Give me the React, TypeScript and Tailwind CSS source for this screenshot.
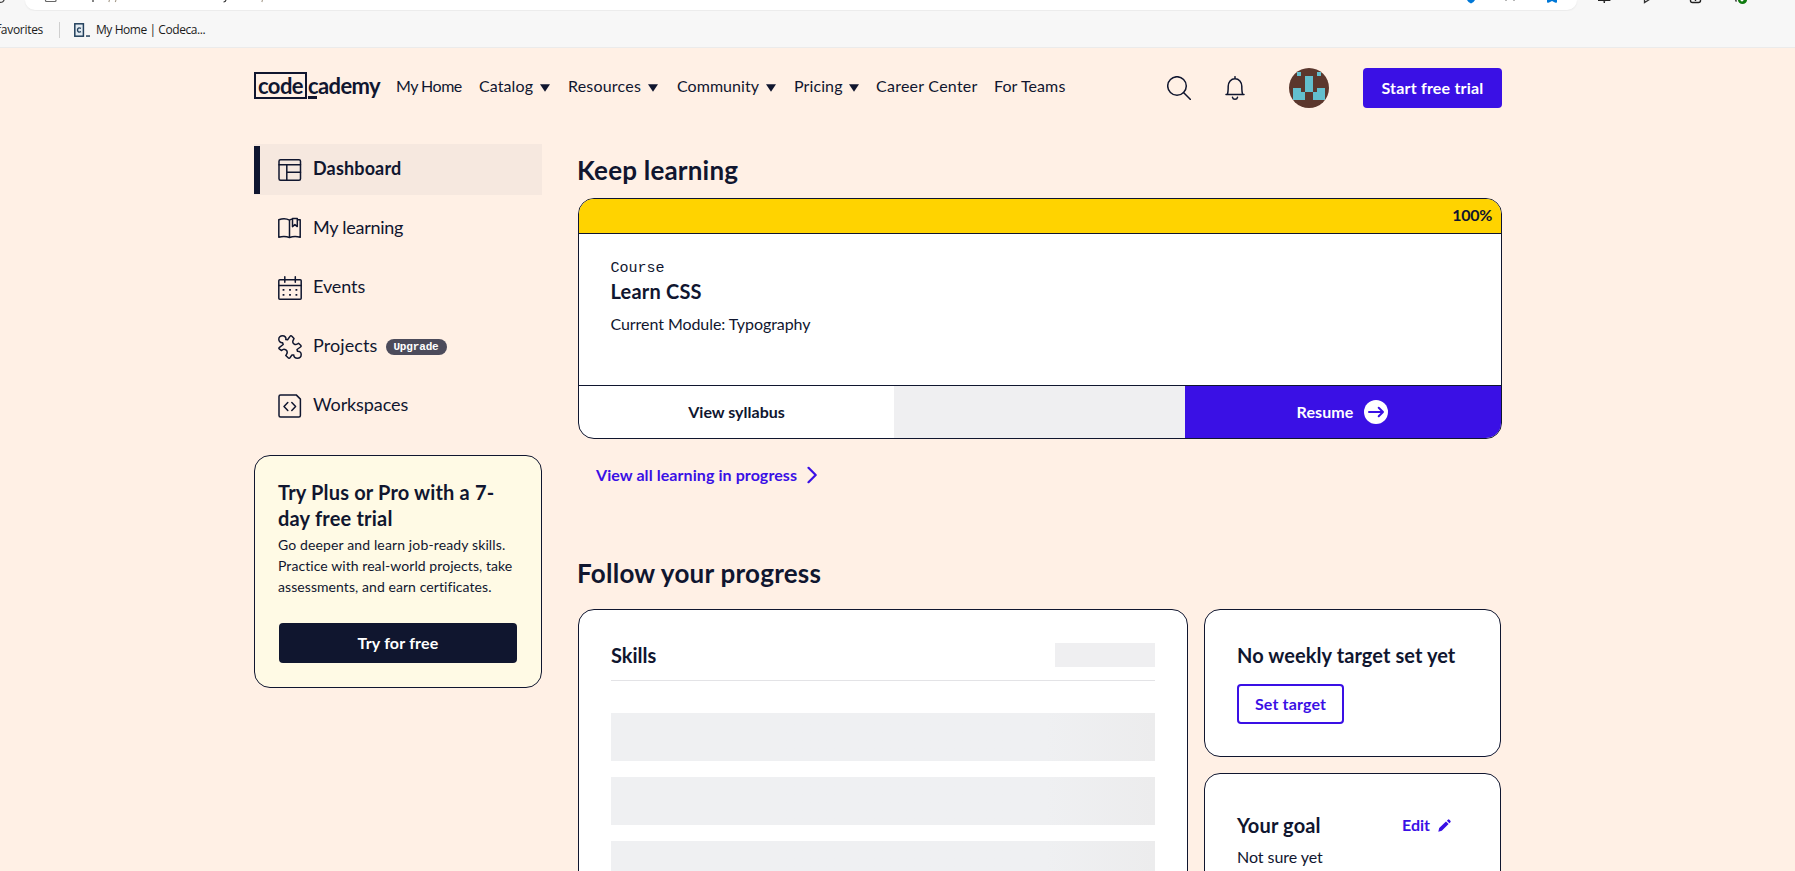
import type { ReactNode } from "react";

function Caret() {
  return (
    <svg width="10" height="8" viewBox="0 0 10 8" className="mt-[3px] shrink-0 fill-[#10162f]">
      <path d="M0 0.3h10L5 7.8z" />
    </svg>
  );
}

function StrokeIcon({ children, className = "" }: { children: ReactNode; className?: string }) {
  return (
    <svg
      width="24"
      height="24"
      viewBox="0 0 24 24"
      fill="none"
      stroke="currentColor"
      strokeWidth="1.5"
      strokeLinejoin="round"
      strokeLinecap="round"
      className={`shrink-0 ${className}`}
    >
      {children}
    </svg>
  );
}

const navItems = [
  { label: "My Home", box: "w-[83px] tracking-[-0.5px]", caret: false },
  { label: "Catalog", box: "w-[89px] pr-[18px] tracking-[0.1px]", caret: true },
  { label: "Resources", box: "w-[109px] pr-[19px] tracking-[0.2px]", caret: true },
  { label: "Community", box: "w-[117px] pr-[18px] tracking-[0.05px]", caret: true },
  { label: "Pricing", box: "w-[82px] pr-[17px] tracking-[0.1px]", caret: true },
  { label: "Career Center", box: "w-[118px] tracking-[0.25px]", caret: false },
  { label: "For Teams", box: "w-[80px] tracking-[0.1px]", caret: false },
];

function BrowserBar() {
  return (
    <div className="h-[48px] border-b border-[#ebebeb] bg-[#f7f7f7] font-['Open_Sans','Noto_Sans',sans-serif]">
      <div className="flex h-[11px] items-start overflow-hidden">
        <div className="flex h-[10px] w-[25px] shrink-0 items-start">
          <svg width="6" height="4" viewBox="0 0 6 4" fill="none" stroke="#444" strokeWidth="1.3">
            <path d="M0 2.3C2 2.5 4 1.5 4.2 -1" />
          </svg>
        </div>
        <div className="flex h-[10px] w-[1552px] shrink-0 items-start rounded-b-[14px] bg-white shadow-[0_1px_2px_rgba(0,0,0,0.06)]">
          <svg width="1552" height="10" viewBox="25 0 1552 10" fill="none">
            <path d="M45.500 -2v2.500q0 1 1 1h8.500q1 0 1-1v-2.500" stroke="#666" strokeWidth="1.2" />
            <path d="M93 0v2M226 0q-0.500 2-2.500 2" stroke="#333" strokeWidth="1.2" />
            <path d="M109.500 0l-0.700 2M116 0l-0.700 2M262.500 0l-0.700 2" stroke="#a59a8a" strokeWidth="1.1" />
            <path d="M1467 0h8q-1 2-4 3.500q-3-1.500-4-3.500z" fill="#0078d7" />
            <path d="M1506 0v1M1514 0v1" stroke="#888" strokeWidth="1.2" />
            <path d="M1547 0h10v2.600l-1.500 0.200l-3.500-1.800l-3.500 1.800l-1.500-0.200z" fill="#0078d7" />
          </svg>
        </div>
        <svg width="200" height="11" viewBox="1577 0 200 11" fill="none" className="shrink-0">
          <path d="M1598 0.300h5l1.200 0.600l1.200-0.600h5M1604.300 0v3" stroke="#222" strokeWidth="1.4" />
          <path d="M1644.500 -3v5.500l5-3" stroke="#333" strokeWidth="1.3" />
          <path d="M1690.500 -3v3.500q0 2 2 2h6q2 0 2-2v-3.500M1695.500 -1v2" stroke="#222" strokeWidth="1.4" />
          <path d="M1735.500 0l1 1.500" stroke="#333" strokeWidth="1.4" />
          <circle cx="1742.500" cy="-0.500" r="4.600" fill="#0f7b0f" />
          <path d="M1740.500 -0.500l1.500 1.500l3-3" stroke="#fff" strokeWidth="1.2" />
        </svg>
      </div>
      <div className="flex h-9 items-start pt-[10px] text-[12px] leading-[18px] text-[#1b1b1b]">
        <span className="flex w-[43px] justify-end whitespace-nowrap tracking-[-0.3px]">favorites</span>
        <span className="mt-[1px] ml-4 h-4 w-px bg-[#cfcfcf]" />
        <svg width="17" height="16" viewBox="0 0 17 16" className="mt-px ml-[14px] shrink-0">
          <rect x="0.800" y="1.800" width="8.600" height="12.400" fill="#e3ebf2" stroke="#23405c" strokeWidth="1.500" />
          <path d="M7 6.300Q3.600 5 3.500 8Q3.600 11 7 9.700" fill="none" stroke="#23405c" strokeWidth="1.400" />
          <path d="M12 13.300h4v1.500h-4z" fill="#23405c" />
        </svg>
        <span className="ml-[5px] whitespace-nowrap tracking-[-0.43px]">My Home | Codeca...</span>
      </div>
    </div>
  );
}

function Logo() {
  return (
    <div className="mt-6 flex h-[29px] w-[143px] shrink-0 items-start text-[22px] leading-[27px] font-bold">
      <span className="flex h-[27px] w-[53px] justify-center border-2 border-[#10162f] leading-[24px] tracking-[-0.55px]">
        code
      </span>
      <span className="relative ml-px leading-[28px] tracking-[-0.6px]">
        cademy
        <span className="absolute top-[24px] left-0 h-[3px] w-[9px] bg-[#10162f]" />
      </span>
    </div>
  );
}

function Avatar() {
  return (
    <svg width="40" height="40" viewBox="0 0 40 40" shapeRendering="crispEdges" className="mt-5 ml-[42px] shrink-0 rounded-full">
      <rect width="40" height="40" fill="#5b372d" />
      <path
        d="M8 4h4v4h-4zM28 4h4v4h-4zM16 8h8v16h-8zM4 20h8v4h4v8h-12zM36 20h-8v4h-4v8h12z"
        fill="#62bfce"
      />
    </svg>
  );
}

function Header() {
  return (
    <header className="flex h-24 items-start">
      <Logo />
      <nav className="mt-[26px] -ml-px flex w-[771px] shrink-0 text-base leading-6">
        {navItems.map((n) => (
          <a key={n.label} className={`flex shrink-0 items-center justify-between whitespace-nowrap ${n.box}`}>
            {n.label}
            {n.caret && <Caret />}
          </a>
        ))}
      </nav>
      <StrokeIcon className="mt-7">
        <circle cx="10" cy="10" r="9.300" />
        <path d="M16.500 16.500l7 7" />
      </StrokeIcon>
      <StrokeIcon className="mt-7 ml-8">
        <path d="M12 0.700v2M4.200 18.500c1-1.500 1-5 1-8.200c0-4.200 2.800-7.600 6.800-7.600s6.800 3.400 6.800 7.600c0 3.200 0 6.700 1 8.200h1.200h-18h1.200M9.500 21.300c0.500 2.600 4.500 2.600 5 0" />
      </StrokeIcon>
      <Avatar />
      <button className="mt-5 ml-[34px] h-10 w-[139px] shrink-0 rounded bg-[#3a10e5] pb-px text-base leading-6 font-bold tracking-[0.2px] text-white">
        Start free trial
      </button>
    </header>
  );
}

const sideItems = [
  {
    label: "Dashboard",
    track: "tracking-[0.15px]",
    active: true,
    icon: (
      <>
        <rect x="1" y="1.800" width="21.500" height="20.500" rx="1.500" />
        <path d="M1 6.800h21.500M8.800 6.800v15.500M8.800 14.300h13.700" />
      </>
    ),
  },
  {
    label: "My learning",
    track: "tracking-[-0.25px]",
    icon: (
      <path d="M11.500 3.200C8 1.200 4.500 1.400 0.800 2.800v17.400c3.700-1 7.200-1 10.700 0.300c3.500-1.300 7-1.300 10.700-0.300V2.800h-2.700M11.500 3.200v17.300M11.500 3.200q1.500-0.900 3-1.100M14.500 1.600h4.800v8l-2.400-2l-2.400 2z" />
    ),
  },
  {
    label: "Events",
    track: "tracking-[-0.1px]",
    icon: (
      <>
        <rect x="0.800" y="3.800" width="22.400" height="19.400" rx="1" />
        <path d="M0.800 9.500h22.400M6.800 0.800v5.500M17.300 0.800v5.500" />
        <path
          d="M4.600 13h1.800v1.800h-1.800zM11.100 13h1.800v1.800h-1.800zM17.500 13h1.800v1.800h-1.800zM4.600 18h1.800v1.800h-1.800zM11.100 18h1.800v1.800h-1.800zM17.500 18h1.800v1.800h-1.800z"
          fill="currentColor"
          stroke="none"
        />
      </>
    ),
  },
  {
    label: "Projects",
    track: "tracking-[0.1px]",
    badge: "Upgrade",
    icon: (
      <path d="M7.800 4.600C8.400 2.400 6.700 0.800 4.500 0.800C2.300 0.800 0.800 2.300 0.800 4.300C0.800 6.600 2.600 7.900 4.600 7.700L5.200 9.500L1.500 12.300Q0.200 13.300 1.500 14.200L3.600 15.500C6.200 12.700 10.800 15.500 8.500 19.400L7.800 20.500L10.400 23Q11.200 23.600 12 22.700L14 19.900L15.800 20C15.600 22 17.300 23.200 19.300 23.200C21.600 23.200 23.200 21.600 23.200 19.500C23.200 17.300 21.500 16 19.500 16.200L19 14.500L22.500 12Q23.600 11.200 22.700 10.300L20.500 8.200C17.400 11.100 13 8 15.500 4.700L16 3.500L13.900 1.200Q12.900 0.300 12 1.400L9.600 4.700Z" />
    ),
  },
  {
    label: "Workspaces",
    track: "tracking-[-0.1px]",
    icon: (
      <>
        <path d="M2.500 0.900h15.700l4.200 4.200v16.500q0 1.500-1.500 1.500h-18.400q-1.500 0-1.500-1.500v-19.200q0-1.500 1.500-1.500z" />
        <path d="M9.800 8.500l-3.800 4l3.800 4M13.800 8.500l3.800 4l-3.800 4" />
      </>
    ),
  },
];

function Sidebar() {
  return (
    <aside className="w-[288px] shrink-0">
      <ul className="flex flex-col gap-2">
        {sideItems.map((s) => (
          <li
            key={s.label}
            className={`flex h-[51px] items-start ${s.active ? "bg-[#f6e8df] font-bold" : ""}`}
          >
            <span className={`mt-0.5 h-12 w-1.5 ${s.active ? "bg-[#10162f]" : ""}`} />
            <StrokeIcon className="mt-[14px] ml-[18px]">{s.icon}</StrokeIcon>
            <span className={`mt-[12px] ml-[11px] text-lg leading-6 ${s.track}`}>{s.label}</span>
            {s.badge && (
              <span className="mt-[18px] ml-2 flex h-4 w-[61px] items-center justify-center rounded-full bg-[#4c4b5b] font-['Liberation_Mono',monospace] text-[11px] leading-4 font-bold tracking-[-0.15px] text-white">
                {s.badge}
              </span>
            )}
          </li>
        ))}
      </ul>
      <section className="mt-6 h-[233px] rounded-2xl border border-[#10162f] bg-[#fffae5] px-6 pt-[23px]">
        <h2 className="-ml-px text-xl leading-[26px] font-bold whitespace-nowrap">
          <span className="tracking-[0.17px]">Try Plus or Pro with a 7-</span>
          <br />
          <span className="tracking-[0.2px]">day free trial</span>
        </h2>
        <p className="mt-[3px] -ml-px text-sm leading-[21px] whitespace-nowrap">
          <span className="tracking-[0.13px]">Go deeper and learn job-ready skills.</span>
          <br />
          <span className="tracking-[0.07px]">Practice with real-world projects, take</span>
          <br />
          <span className="tracking-[0.07px]">assessments, and earn certificates.</span>
        </p>
        <button className="mt-[26px] h-10 w-full rounded bg-[#10162f] pb-px text-base leading-6 font-bold tracking-[0.2px] text-white">
          Try for free
        </button>
      </section>
    </aside>
  );
}

function CourseCard() {
  return (
    <section className="mt-[11px] flex h-[241px] flex-col overflow-hidden rounded-2xl border border-[#10162f] bg-white">
      <div className="flex h-[35px] shrink-0 justify-end border-b border-[#10162f] bg-[#ffd300] pt-1 pr-[9px] text-base leading-6 font-bold tracking-[-0.3px]">
        100%
      </div>
      <div className="h-[152px] shrink-0 border-b border-[#10162f] pt-[26px] pr-8 pl-[31.5px]">
        <p className="font-['Liberation_Mono',monospace] text-[15px] leading-[18px]">Course</p>
        <h3 className="text-xl leading-[26px] font-bold tracking-[0.2px]">Learn CSS</h3>
        <p className="mt-2 text-base leading-6 tracking-[-0.06px]">Current Module: Typography</p>
      </div>
      <div className="flex min-h-0 flex-1 items-stretch text-base leading-6 font-bold">
        <div className="flex w-[315px] items-center justify-center">View syllabus</div>
        <div className="w-[291px] bg-[#efeff1]" />
        <div className="flex flex-1 items-center justify-center gap-[11px] bg-[#3a10e5] pr-[1px] text-white">
          <span className="tracking-[0.1px]">Resume</span>
          <svg width="24" height="24" viewBox="0 0 24 24">
            <circle cx="12" cy="12" r="12" fill="#fff" />
            <path
              d="M5 12h14M14.700 7.800l4.300 4.200l-4.300 4.200"
              fill="none"
              stroke="#3a10e5"
              strokeWidth="2"
              strokeLinecap="round"
              strokeLinejoin="round"
            />
          </svg>
        </div>
      </div>
    </section>
  );
}

function Progress() {
  return (
    <div className="mt-[20px] flex gap-4">
      <section className="h-[400px] w-[610px] shrink-0 rounded-2xl border border-[#10162f] bg-white px-8 pt-[33px]">
        <div className="flex h-[38px] items-start justify-between border-b border-[#e3e3e6]">
          <h3 className="-mt-px text-xl leading-[26px] font-bold">Skills</h3>
          <div className="h-6 w-[100px] bg-[#efeff1]" />
        </div>
        <div className="mt-8 flex flex-col gap-4">
          {[0, 1, 2, 3].map((i) => (
            <div key={i} className="h-12 bg-linear-to-r from-[#eff0f2] from-80% to-[#ececed]" />
          ))}
        </div>
      </section>
      <div className="flex w-[297px] flex-col gap-4">
        <section className="h-[148px] rounded-2xl border border-[#10162f] bg-white px-8 pt-8">
          <h3 className="text-xl leading-[26px] font-bold tracking-[0.08px] whitespace-nowrap">No weekly target set yet</h3>
          <button className="mt-4 h-10 w-[107px] rounded border-2 border-[#3a10e5] pb-px text-base leading-5 font-bold tracking-[0.15px] whitespace-nowrap text-[#3a10e5]">
            Set target
          </button>
        </section>
        <section className="h-[220px] rounded-2xl border border-[#10162f] bg-white px-8 pt-[38px]">
          <div className="flex items-start">
            <h3 className="w-[165px] text-xl leading-[26px] font-bold tracking-[0.15px]">Your goal</h3>
            <span className="text-base leading-[26px] font-bold text-[#3a10e5]">Edit</span>
            <svg width="13" height="13" viewBox="0 0 13 13" className="mt-[7px] ml-2 fill-[#3a10e5]">
              <path d="M0.300 12.700l0.900-3.700l6.800-6.500l2.600 2.600l-6.800 6.600zM8.900 1.700l1-1q0.800-0.700 1.500 0l1 1q0.700 0.800 0 1.500l-1 1z" />
            </svg>
          </div>
          <p className="mt-[7px] text-base leading-6 tracking-[-0.05px]">Not sure yet</p>
        </section>
      </div>
    </div>
  );
}

export default function App() {
  return (
    <div className="h-[871px] w-[1795px] overflow-hidden bg-[#fff0e5] font-['Lato',sans-serif] text-[#10162f]">
      <BrowserBar />
      <div className="ml-[254px] w-[1248px]">
        <Header />
        <div className="flex gap-9">
          <Sidebar />
          <main className="w-[924px] shrink-0 pt-[9px]">
            <h1 className="-ml-px text-[26px] leading-[34px] font-bold tracking-[0.2px]">Keep learning</h1>
            <CourseCard />
            <a className="mt-6 ml-[18px] flex items-center gap-[10px] text-base leading-6 font-bold tracking-[0.08px] text-[#3a10e5]">
              View all learning in progress
              <svg width="11" height="18" viewBox="0 0 11 18" fill="none" stroke="currentColor" strokeWidth="2.2" strokeLinecap="round" strokeLinejoin="round">
                <path d="M1.500 1.800l7.200 7.200l-7.200 7.200" />
              </svg>
            </a>
            <h1 className="mt-[69px] -mb-px -ml-px text-[26px] leading-[34px] font-bold tracking-[0.25px]">Follow your progress</h1>
            <Progress />
          </main>
        </div>
      </div>
    </div>
  );
}
